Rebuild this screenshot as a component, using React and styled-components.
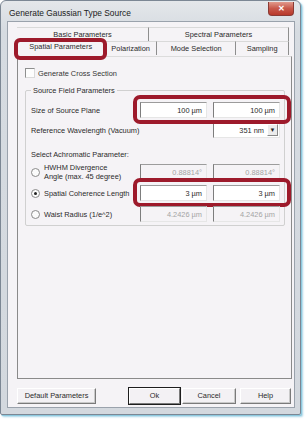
import React from "react";
import styled, { createGlobalStyle, css } from "styled-components";

const Global = createGlobalStyle`
  html, body { margin: 0; padding: 0; background: #ffffff; }
  body { font-family: "Liberation Sans", Arial, sans-serif; }
  * { box-sizing: border-box; }
`;

const Page = styled.div`
  width: 308px;
  height: 423px;
  padding: 0;
  background: #ffffff;
`;

const Window = styled.div`
  width: 301px;
  height: 415px;
  border: 1px solid #7c8794;
  border-radius: 6px 6px 2px 2px;
  background: linear-gradient(#e4e7ea, #d6dbe1 30px, #d3d8de);
  box-shadow: 1px 1px 0 #8dc9de, 2px 2px 2px rgba(110, 185, 215, 0.6);
  display: flex;
  flex-direction: column;
  padding: 0 5px 6px 6px;
`;

const TitleBar = styled.div`
  height: 20px;
  display: flex;
  align-items: flex-start;
  justify-content: space-between;
`;

const Title = styled.div`
  font-size: 8.4px;
  color: #1b1b1b;
  padding: 7px 0 0 2px;
`;

const CloseBtn = styled.div`
  width: 26px;
  height: 14px;
  margin: 1px 1px 0 0;
  border: 1px solid #8a3a34;
  border-top: none;
  border-radius: 0 0 4px 4px;
  background: linear-gradient(#e19a8c, #c8584a 50%, #b8382a);
  display: flex;
  align-items: center;
  justify-content: center;
  color: #fff;
  font-size: 8px;
  font-weight: bold;
`;

const Client = styled.div`
  flex: 1;
  border: 1px solid #9aa2ac;
  background: #f5f3f6;
  display: flex;
  flex-direction: column;
  padding: 5px 3px 3px 9px;
  font-size: 7.4px;
  color: #2a2a2a;
`;

const TabsArea = styled.div`
  position: relative;
  display: flex;
  flex-direction: column;
  padding-right: 2px;
`;

const TabRow = styled.div`
  display: flex;
  height: 14px;
`;

const Tab = styled.div`
  width: ${(p) => p.$w}px;
  height: ${(p) => (p.$selected ? 17 : 14)}px;
  margin-top: ${(p) => (p.$selected ? -2 : 0)}px;
  display: flex;
  align-items: center;
  justify-content: center;
  border-right: 1px solid ${(p) => (p.$selected ? "#f5f3f6" : "#8e8e8e")};
  border-top: 1px solid #d9d9d9;
  background: #f5f3f6;
  color: #2a2a2a;
  position: relative;
  z-index: ${(p) => (p.$selected ? 2 : 1)};
  padding-bottom: ${(p) => (p.$selected ? 3 : 0)}px;
`;

const TabHighlight = styled.div`
  position: absolute;
  left: -3px;
  top: 11px;
  width: 93px;
  height: 22px;
  border: 4px solid #9d1a2b;
  border-radius: 6px;
  z-index: 5;
  pointer-events: none;
`;

const Panel = styled.div`
  height: 323px;
  width: 275px;
  border-left: 1px solid #8a8a8a;
  border-right: 1px solid #8a8a8a;
  border-bottom: 1px solid #8a8a8a;
  border-top: 1px solid #dcdcdc;
  display: flex;
  flex-direction: column;
  padding: 10px 7px 0 7px;
  margin-top: 1px;
`;

const CheckRow = styled.label`
  display: flex;
  align-items: center;
  gap: 3px;
  height: 12px;
  color: #333;
`;

const CheckBox = styled.span`
  width: 10px;
  height: 10px;
  border: 1px solid #8e8f8f;
  border-right-color: #dadada;
  border-bottom-color: #dadada;
  background: #fdfdfd;
  display: inline-block;
`;

const Group = styled.fieldset`
  margin: 7px 0 0 0;
  padding: 5px 3px 1px 5px;
  border: 1px solid #d0d0d0;
  border-radius: 2px;
  width: 260px;
  display: flex;
  flex-direction: column;
`;

const Legend = styled.legend`
  padding: 0 2px;
  margin-left: 0;
  font-size: 7.4px;
  color: #2a2a2a;
`;

const Row = styled.div`
  display: flex;
  align-items: center;
  height: ${(p) => p.$h || 20}px;
  margin-top: ${(p) => p.$mt || 0}px;
`;

const Label = styled.div`
  width: 109px;
  flex: none;
  white-space: nowrap;
  color: #2a2a2a;
  line-height: 9px;
`;

const RadioLabel = styled.div`
  display: flex;
  align-items: center;
  width: 109px;
  flex: none;
  gap: 4px;
  color: #2a2a2a;
  line-height: 9px;
  white-space: nowrap;
`;

const Radio = styled.span`
  width: 9px;
  height: 9px;
  border-radius: 50%;
  border: 1px solid #8a8a8a;
  background: #fbfbfb;
  flex: none;
  display: flex;
  align-items: center;
  justify-content: center;
  &::after {
    content: "";
    width: 3px;
    height: 3px;
    border-radius: 50%;
    background: ${(p) => (p.$checked ? "#222" : "transparent")};
  }
`;

const Pair = styled.div`
  position: relative;
  display: flex;
  gap: 6px;
  ${(p) =>
    p.$highlight &&
    css`
      &::before {
        content: "";
        position: absolute;
        left: -7px;
        right: -11px;
        top: -7px;
        bottom: -6px;
        border: 4px solid #9d1a2b;
        border-radius: 7px;
        pointer-events: none;
      }
    `}
`;

const Field = styled.div`
  width: 67px;
  height: 16px;
  border: 1px solid #b9b9b9;
  border-left-color: #7d7d7d;
  border-top-color: #9c9c9c;
  border-bottom-color: #e6e6e6;
  border-right-color: #e6e6e6;
  background: ${(p) => (p.$disabled ? "#f5f3f6" : "#ffffff")};
  color: ${(p) => (p.$disabled ? "#a4a4a4" : "#2a2a2a")};
  display: flex;
  align-items: center;
  justify-content: flex-end;
  padding-right: 4px;
`;

const Select = styled.div`
  margin-left: 73px;
  width: 67px;
  height: 16px;
  border: 1px solid #e6e6e6;
  border-left-color: #7d7d7d;
  border-top-color: #9c9c9c;
  background: #fff;
  display: flex;
  align-items: center;
  justify-content: flex-end;
  padding: 1px;
  gap: 3px;
`;

const SelectBtn = styled.span`
  width: 11px;
  height: 12px;
  background: #ececec;
  border: 1px solid #fff;
  border-right-color: #888;
  border-bottom-color: #888;
  display: flex;
  align-items: center;
  justify-content: center;
  font-size: 6px;
  color: #222;
`;

const Spacer = styled.div`
  flex: 1;
`;

const ButtonBar = styled.div`
  display: flex;
  align-items: center;
  height: 15px;
  margin-top: 9px;
  width: 275px;
`;

const Button = styled.div`
  width: ${(p) => p.$w}px;
  height: 16px;
  margin-left: ${(p) => p.$ml || 0}px;
  display: flex;
  align-items: center;
  justify-content: center;
  background: #f3f1f4;
  border: 1px solid #ffffff;
  border-right-color: #7a7a7a;
  border-bottom-color: #7a7a7a;
  box-shadow: ${(p) => (p.$default ? "0 0 0 1px #1e1e1e" : "inset -1px -1px 0 #c9c9c9")};
  color: #2a2a2a;
`;

export default function App() {
  return (
    <Page>
      <Global />
      <Window>
        <TitleBar>
          <Title>Generate Gaussian Type Source</Title>
          <CloseBtn>✕</CloseBtn>
        </TitleBar>
        <Client>
          <TabsArea>
            <TabRow>
              <Tab $w={133}>Basic Parameters</Tab>
              <Tab $w={141}>Spectral Parameters</Tab>
            </TabRow>
            <TabRow>
              <Tab $w={89} $selected>Spatial Parameters</Tab>
              <Tab $w={52}>Polarization</Tab>
              <Tab $w={80}>Mode Selection</Tab>
              <Tab $w={53}>Sampling</Tab>
            </TabRow>
            <TabHighlight />
          </TabsArea>
          <Panel>
            <CheckRow>
              <CheckBox />
              Generate Cross Section
            </CheckRow>
            <Group>
              <Legend>Source Field Parameters</Legend>
              <Row $h={20}>
                <Label>Size of Source Plane</Label>
                <Pair $highlight>
                  <Field>100 µm</Field>
                  <Field>100 µm</Field>
                </Pair>
              </Row>
              <Row $h={20}>
                <Label>Reference Wavelength (Vacuum)</Label>
                <Select>
                  351 nm <SelectBtn>▼</SelectBtn>
                </Select>
              </Row>
              <Row $h={16} $mt={6}>
                <Label>Select Achromatic Parameter:</Label>
              </Row>
              <Row $h={20}>
                <RadioLabel>
                  <Radio />
                  <span>
                    HWHM Divergence
                    <br />
                    Angle (max. 45 degree)
                  </span>
                </RadioLabel>
                <Pair>
                  <Field $disabled>0.88814°</Field>
                  <Field $disabled>0.88814°</Field>
                </Pair>
              </Row>
              <Row $h={22}>
                <RadioLabel>
                  <Radio $checked />
                  <span>Spatial Coherence Length</span>
                </RadioLabel>
                <Pair $highlight>
                  <Field>3 µm</Field>
                  <Field>3 µm</Field>
                </Pair>
              </Row>
              <Row $h={20}>
                <RadioLabel>
                  <Radio />
                  <span>Waist Radius (1/e^2)</span>
                </RadioLabel>
                <Pair>
                  <Field $disabled>4.2426 µm</Field>
                  <Field $disabled>4.2426 µm</Field>
                </Pair>
              </Row>
            </Group>
            <Spacer />
          </Panel>
          <ButtonBar>
            <Button $w={79}>Default Parameters</Button>
            <Button $w={51} $ml={33} $default>Ok</Button>
            <Button $w={54} $ml={2}>Cancel</Button>
            <Button $w={51} $ml={4}>Help</Button>
          </ButtonBar>
        </Client>
      </Window>
    </Page>
  );
}
